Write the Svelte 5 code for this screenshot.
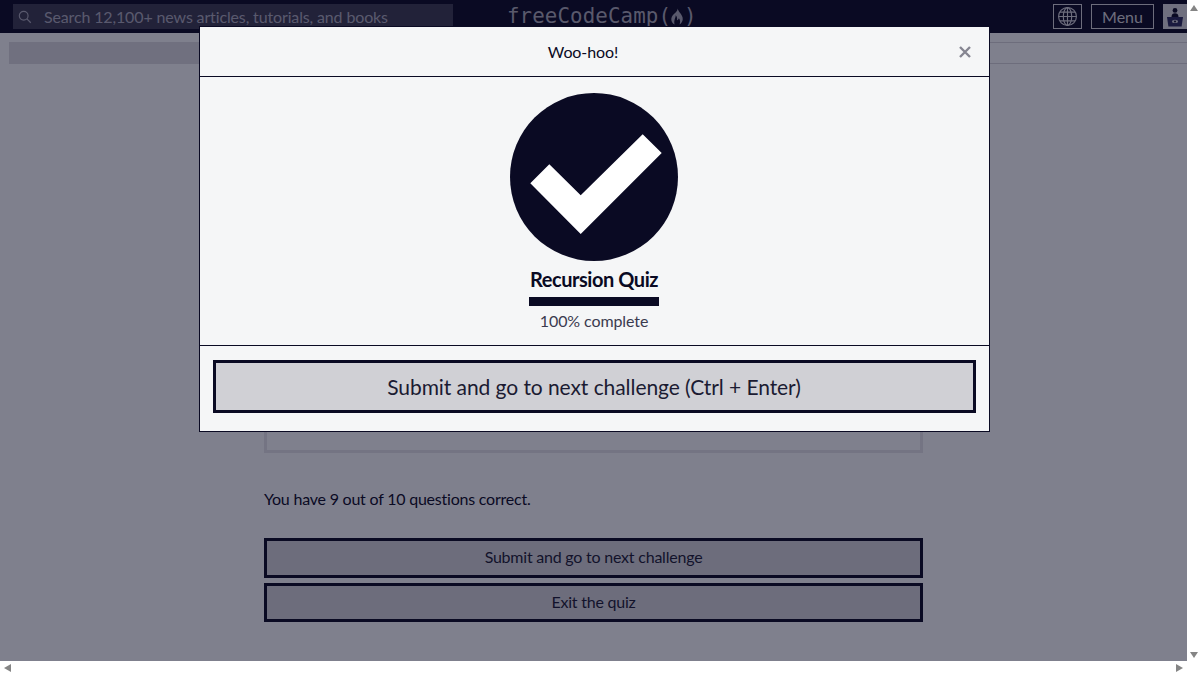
<script lang="ts">
  let Title = 'Recursion Quiz'
</script>

<div class="window">
  <div class="viewport">
    <header class="navbar">
      <div class="search">
        <svg class="search-icon" viewBox="0 0 16 16" width="14" height="14">
          <circle cx="6.5" cy="6.5" r="5" fill="none" stroke="currentColor" stroke-width="1.3"/>
          <path d="M10.2 10.2 L14.6 14.6" stroke="currentColor" stroke-width="1.4"/>
        </svg>
        <span>Search 12,100+ news articles, tutorials, and books</span>
      </div>
      <div class="logo">
        <span>freeCodeCamp(</span>
        <svg viewBox="0 0 14 18" width="14" height="17">
          <path fill="currentColor" fill-rule="evenodd" d="M7.6 0.4 C8.2 3.4 12 6 13 10.2 C13.6 13.4 11.8 16.2 9.6 17.4 C10.6 15.2 10.6 12.8 9 10.8 C8.7 12 8 12.6 7 13 C7.4 11.2 7 9.2 5.6 7.8 C5.8 10.6 3.4 12.6 4.4 17.4 C2 16.2 0.6 13.6 1 11 C1.4 8 3.4 6.8 5 5.2 C6.4 3.8 7.6 2.6 7.6 0.4 Z"/>
        </svg>
        <span>)</span>
      </div>
      <div class="nav-right">
        <button class="nav-btn globe" aria-label="Language">
          <svg viewBox="0 0 24 24" width="21" height="21" fill="none" stroke="currentColor" stroke-width="1.3">
            <circle cx="12" cy="12" r="10.2"/>
            <ellipse cx="12" cy="12" rx="4.8" ry="10.2"/>
            <path d="M12 1.8 V22.2 M1.8 12 H22.2 M3.2 7 H20.8 M3.2 17 H20.8"/>
          </svg>
        </button>
        <button class="nav-btn menu">Menu</button>
        <div class="avatar">
          <svg viewBox="0 0 24 24" width="24" height="24">
            <circle cx="12" cy="5.4" r="2.4" fill="#0a0a23"/>
            <path d="M8.5 12 C8.5 9 10 8.2 12 8.2 C14 8.2 15.5 9 15.5 12 Z" fill="#0a0a23"/>
            <path d="M4 12 H20 L18.6 21.5 H5.4 Z" fill="#2a2a5a"/>
            <ellipse cx="12" cy="16.4" rx="3" ry="1.6" fill="#c8c8d0"/>
            <circle cx="12" cy="16.4" r="1" fill="#0a0a23"/>
          </svg>
        </div>
      </div>
    </header>

    <div class="breadcrumbs">
      <div class="crumb"></div>
      <div class="crumb-rest"></div>
    </div>

    <main class="quiz">
      <div class="question-box"></div>
      <p class="score">You have 9 out of 10 questions correct.</p>
      <button class="quiz-btn">Submit and go to next challenge</button>
      <button class="quiz-btn last">Exit the quiz</button>
    </main>

    <div class="overlay">
      <div class="modal">
        <div class="modal-head">
          <span>Woo-hoo!</span>
          <button class="close" aria-label="Close">
            <svg viewBox="0 0 12 12" width="12" height="12">
              <path d="M1 1 L11 11 M11 1 L1 11" stroke="currentColor" stroke-width="2.4"/>
            </svg>
          </button>
        </div>
        <div class="modal-body">
          <svg class="check" viewBox="0 0 168 168" width="168" height="168">
            <circle cx="84" cy="84" r="84" fill="#0a0a23"/>
            <path fill="#fff" d="M20.3 90.3 L39.3 71.3 L70.7 102.3 L132.7 41.3 L151.7 60 L70.7 141 Z"/>
          </svg>
          <h2>{Title}</h2>
          <div class="progress"></div>
          <p>100% complete</p>
        </div>
        <div class="modal-foot">
          <button class="next">Submit and go to next challenge (Ctrl + Enter)</button>
        </div>
      </div>
    </div>
  </div>

  <div class="vbar">
    <span class="arrow up"></span>
    <span class="arrow down"></span>
  </div>
  <div class="hbar">
    <span class="arrow left"></span>
    <span class="arrow right"></span>
  </div>
  <div class="corner"></div>
</div>

<style>
  :global(body) { margin: 0; }

  .window {
    display: grid;
    grid-template-columns: 1187px 13px;
    grid-template-rows: 661px 13px;
    width: 1200px;
    height: 674px;
    overflow: hidden;
    background: #fff;
    font-family: Lato, "Liberation Sans", sans-serif;
  }
  .viewport {
    position: relative;
    overflow: hidden;
    background: #f5f6f7;
    color: #0a0a23;
  }

  /* navbar */
  .navbar {
    display: flex;
    align-items: center;
    justify-content: space-between;
    position: relative;
    height: 33px;
    padding: 0 0 0 13px;
    box-sizing: border-box;
    background: #0a0a23;
    color: #f5f6f7;
  }
  .search {
    display: flex;
    align-items: center;
    gap: 12px;
    width: 440px;
    height: 25px;
    padding-left: 5px;
    box-sizing: border-box;
    background: #3b3b4f;
    color: #a9a9b8;
    font-size: 16px;
    letter-spacing: -0.14px;
    white-space: nowrap;
  }
  .search-icon { flex: none; }
  .logo {
    position: absolute;
    left: 507px;
    top: 3px;
    display: flex;
    align-items: center;
    font-family: "DejaVu Sans Mono", monospace;
    font-size: 20.8px;
    letter-spacing: 0.1px;
    line-height: 26px;
    color: #a9a9b4;
  }
  .logo svg { margin: 0 0 0 -1px; }
  .nav-right {
    display: flex;
    align-items: center;
    gap: 9px;
  }
  .nav-btn {
    height: 25px;
    padding: 0;
    display: flex;
    align-items: center;
    justify-content: center;
    background: transparent;
    border: 1px solid #d0d0d5;
    color: #d0d0d5;
    font-family: inherit;
    font-size: 16px;
  }
  .globe { width: 29px; }
  .menu { width: 63px; }
  .avatar {
    display: flex;
    align-items: center;
    justify-content: center;
    width: 24px;
    height: 25px;
    background: #d6d6da;
  }

  /* page behind the modal */
  .breadcrumbs {
    display: flex;
    height: 22px;
    margin-top: 9px;
    padding-left: 9px;
  }
  .crumb {
    width: 400px;
    background: #d6d6da;
  }
  .crumb-rest {
    flex: 1;
    height: 20px;
    border-top: 1px solid #d0d0d5;
    border-bottom: 1px solid #d0d0d5;
  }
  .quiz {
    display: flex;
    flex-direction: column;
    width: 659px;
    margin: 0 auto;
    font-size: 16px;
    letter-spacing: -0.22px;
  }
  .question-box {
    height: 383px;
    margin-top: 6px;
    border: 3px solid #dfdfe2;
    box-sizing: border-box;
  }
  .score {
    margin: 35px 0 29px;
    line-height: 21px;
  }
  .quiz-btn {
    height: 40px;
    margin-bottom: 5px;
    padding: 0 0 3px;
    background: #d0d0d5;
    border: 3px solid #0a0a23;
    color: #1b1b32;
    font-family: inherit;
    font-size: 16px;
    letter-spacing: -0.22px;
  }
  .quiz-btn.last { height: 39px; }

  /* modal */
  .overlay {
    position: absolute;
    inset: 0;
    display: flex;
    justify-content: center;
    align-items: flex-start;
    padding: 26px 0 0 1px;
    background: rgba(10, 10, 35, 0.5);
  }
  .modal {
    width: 791px;
    box-sizing: border-box;
    border: 1px solid #0a0a23;
    background: #f5f6f7;
  }
  .modal-head {
    position: relative;
    display: flex;
    align-items: center;
    justify-content: center;
    height: 49px;
    padding-right: 22px;
    border-bottom: 1px solid #0a0a23;
    font-size: 16px;
    letter-spacing: -0.1px;
  }
  .close {
    position: absolute;
    right: 18px;
    top: 19px;
    display: flex;
    padding: 0;
    background: none;
    border: 0;
    color: #858591;
  }
  .modal-body {
    display: flex;
    flex-direction: column;
    align-items: center;
    height: 269px;
    box-sizing: border-box;
    padding-top: 16px;
    border-bottom: 1px solid #0a0a23;
  }
  .check { flex: none; }
  .modal-body h2 {
    margin: 5px 0 5px;
    font-size: 20px;
    line-height: 26px;
    font-weight: 700;
    letter-spacing: -0.45px;
  }
  .progress {
    width: 130px;
    height: 9px;
    background: #0a0a23;
  }
  .modal-body p {
    margin: 4px 0 0;
    font-size: 16px;
    letter-spacing: -0.1px;
    line-height: 22px;
    color: #3b3b4f;
  }
  .modal-foot {
    display: flex;
    height: 85px;
    box-sizing: border-box;
    padding: 14px 13px 18px;
  }
  .next {
    flex: 1;
    background: #d0d0d5;
    border: 3px solid #0a0a23;
    color: #1b1b32;
    font-family: inherit;
    font-size: 21px;
    letter-spacing: -0.07px;
  }

  /* scrollbars */
  .vbar, .hbar {
    position: relative;
    display: flex;
    background: #fff;
  }
  .vbar {
    flex-direction: column;
    justify-content: space-between;
    align-items: center;
    padding: 5px 0 3px;
  }
  .hbar {
    justify-content: space-between;
    align-items: center;
    padding: 0 4px 0 4px;
  }
  .corner { background: #fff; }
  .arrow { width: 0; height: 0; }
  .up    { border: 4px solid transparent; border-top: 0; border-bottom: 6px solid #858585; }
  .down  { border: 4px solid transparent; border-bottom: 0; border-top: 6px solid #858585; }
  .left  { border: 4.5px solid transparent; border-left: 0; border-right: 7px solid #858585; }
  .right { border: 4.5px solid transparent; border-right: 0; border-left: 7px solid #858585; }
</style>
